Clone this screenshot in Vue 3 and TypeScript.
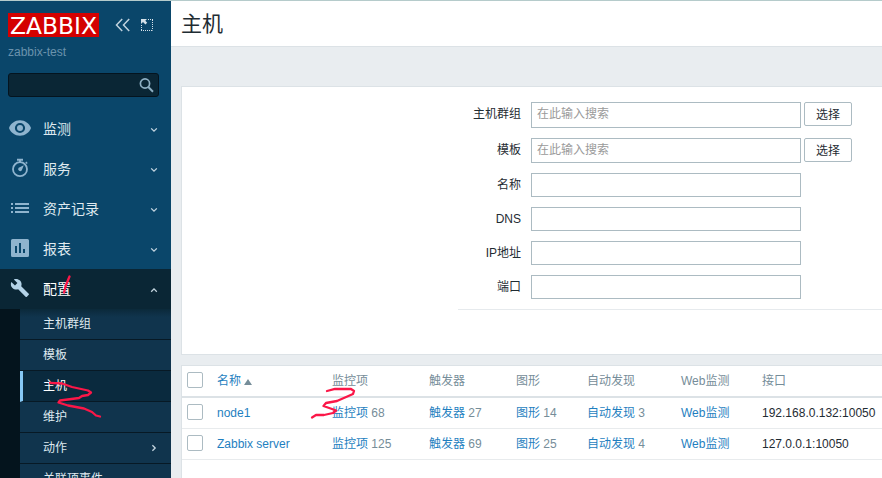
<script setup lang="ts">
interface MenuItem {
  label: string
  icon: string
  open?: boolean
}
interface Host {
  name: string
  items: number
  triggers: number
  graphs: number
  discovery: number
  address: string
}

const menu: MenuItem[] = [
  { label: '监测', icon: 'eye' },
  { label: '服务', icon: 'timer' },
  { label: '资产记录', icon: 'list' },
  { label: '报表', icon: 'chart' },
  { label: '配置', icon: 'wrench', open: true },
]
const submenu = [
  { label: '主机群组' },
  { label: '模板' },
  { label: '主机', active: true },
  { label: '维护' },
  { label: '动作', more: true },
  { label: '关联项事件' },
]
const fields = [
  { label: '主机群组', kind: 'select first' },
  { label: '模板', kind: 'select' },
  { label: '名称', kind: '' },
  { label: 'DNS', kind: '' },
  { label: 'IP地址', kind: '' },
  { label: '端口', kind: '' },
]
const hosts: Host[] = [
  { name: 'node1', items: 68, triggers: 27, graphs: 14, discovery: 3, address: '192.168.0.132:10050' },
  { name: 'Zabbix server', items: 125, triggers: 69, graphs: 25, discovery: 4, address: '127.0.0.1:10050' },
]
</script>

<template>
  <div class="page">
    <aside class="sidebar">
      <div class="brand">
        <svg class="logo" width="91" height="24" viewBox="0 0 91 24">
          <rect width="91" height="24" fill="#d40000" />
          <text x="2" y="20.500" textLength="87" lengthAdjust="spacingAndGlyphs">ZABBIX</text>
        </svg>
        <svg class="collapse" width="16" height="14" viewBox="0 0 16 14">
          <path d="M7.2 1 1.5 7l5.7 6M14.2 1 8.5 7l5.7 6" fill="none" stroke="#c0d2de" stroke-width="1.5" />
        </svg>
        <svg class="kiosk" width="12" height="12" viewBox="0 0 12 12" fill="#d5e1e9">
          <path d="M0 0h6L4.3 1.7 6.2 3.7 4.4 5.4 2 3.1 0 5z" />
          <path d="M7 .5H12M11.5 1v10.5M0 11.5h12M.5 6v5" fill="none" stroke="#d5e1e9" stroke-dasharray="1 1" />
        </svg>
      </div>
      <div class="server">zabbix-test</div>
      <div class="search">
        <svg width="15" height="15" viewBox="0 0 15 15" fill="none" stroke="#8fb0c4">
          <circle cx="6" cy="5.5" r="4.600" stroke-width="1.7" />
          <path d="m9.300 9 4.700 4.700" stroke-width="2" />
        </svg>
      </div>

      <nav class="menu">
        <div v-for="m in menu" :key="m.label" class="menu-item" :class="{ open: m.open }">
          <svg class="menu-icon" width="24" height="24" viewBox="0 0 24 24">
            <path v-if="m.icon === 'eye'" fill-rule="evenodd" d="M12 4.3C7 4.3 2.7 7.4 1 12c1.7 4.6 6 7.700 11 7.700S21.3 16.6 23 12C21.3 7.4 17 4.3 12 4.3zM12 17.1a5.1 5.1 0 1 1 0-10.2 5.1 5.1 0 0 1 0 10.2zM12 9a3 3 0 1 0 0 6 3 3 0 0 0 0-6z" />
            <g v-else-if="m.icon === 'timer'" transform="translate(0 .7)">
              <path d="M9 2h6v2H9zM11 3h2v3h-2zM17.3 5.8l1-1 1.4 1.4-1 1z" />
              <circle cx="12" cy="12.500" r="7" fill="none" stroke="#8fb4ce" stroke-width="1.8" />
              <path d="M15.8 8.6 13.7 13.7A2 2 0 1 1 10.7 11z" />
            </g>
            <path v-else-if="m.icon === 'list'" d="M3 7h2v2H3zM3 11h2v2H3zM3 15h2v2H3zM7 7h14v2H7zM7 11h14v2H7zM7 15h14v2H7z" />
            <path v-else-if="m.icon === 'chart'" transform="translate(0 1)" fill-rule="evenodd" d="M4.5 2h15A1.5 1.5 0 0 1 21 3.500v15a1.500 1.500 0 0 1-1.500 1.500h-15A1.500 1.500 0 0 1 3 18.500v-15A1.500 1.500 0 0 1 4.500 2zM7 9v7h2V9zM11 6v10h2V6zM15 12v4h2v-4z" />
            <path v-else transform="translate(1.500 1.600) scale(.93)" d="M20.700 17.300 12.600 9.300C13.400 7.200 13 4.900 11.300 3.200 9.500 1.400 6.800 1 4.700 2L8.500 5.800 5.900 8.400 2 4.600C.900 6.800 1.400 9.500 3.200 11.200c1.700 1.700 4.100 2.100 6.100 1.300l8 8c.4.4 1 .4 1.400 0l2-2c.400-.300.400-.900 0-1.200z" />
          </svg>
          <span>{{ m.label }}</span>
          <svg class="chevron" width="8" height="6" viewBox="0 0 8 6">
            <path :d="m.open ? 'M1.200 4.700 4 1.900l2.800 2.800' : 'M1.200 1.400 4 4.200l2.800-2.800'" />
          </svg>
        </div>
      </nav>
      <div class="submenu">
        <div v-for="s in submenu" :key="s.label" class="sub-item" :class="{ active: s.active }">
          <span>{{ s.label }}</span>
          <svg v-if="s.more" class="chevron more" width="6" height="8" viewBox="0 0 6 8">
            <path d="M1.400 1.200 4.200 4 1.400 6.800" />
          </svg>
        </div>
      </div>
    </aside>

    <main class="main">
      <header class="header"><h1>主机</h1></header>
      <section class="filter">
        <div class="form">
          <div v-for="f in fields" :key="f.label" class="field" :class="f.kind">
            <label>{{ f.label }}</label>
            <div class="input"><span v-if="f.kind">在此输入搜索</span></div>
            <button v-if="f.kind" type="button">选择</button>
          </div>
        </div>
      </section>
      <section class="table">
        <div class="row head">
          <span class="check"></span>
          <span class="name"><a>名称</a><i class="sort"></i></span>
          <span>监控项</span><span>触发器</span><span>图形</span><span>自动发现</span><span>Web监测</span><span>接口</span>
        </div>
        <div v-for="h in hosts" :key="h.name" class="row">
          <span class="check"></span>
          <span><a>{{ h.name }}</a></span>
          <span><a>监控项</a> {{ h.items }}</span>
          <span><a>触发器</a> {{ h.triggers }}</span>
          <span><a>图形</a> {{ h.graphs }}</span>
          <span><a>自动发现</a> {{ h.discovery }}</span>
          <span><a>Web监测</a></span>
          <span class="address">{{ h.address }}</span>
        </div>
      </section>
    </main>

    <svg class="marks" width="882" height="478" viewBox="0 0 882 478">
      <path d="M69.500 276.500 66 285 64 292.500" />
      <path d="M50 382.800 62 383.500 72 387 88 390.500 91 392.500 88 395 82 396 79 398 60 400.500 58.500 402.500 68 405.500 84 408.500 92 412 96 415.500 100 416.500" />
      <path d="M327 391 335 388.800 351 389 354 391 353 394 337 401 326 403 323.500 406 332 409 336 410.500 333 413 324 415 316 415 312 417.500" />
    </svg>
  </div>
</template>

<style>
body { overflow: hidden; }
</style>

<style scoped>
* { box-sizing: border-box; }
.page {
  position: relative;
  display: flex;
  width: 882px;
  height: 478px;
  overflow: hidden;
  border-top: 1px solid #b5cbcb;
  background: #e9edf0;
  color: #1f2c33;
  font: 12px/18px "Liberation Sans", "Noto Sans CJK SC", sans-serif;
}
.sidebar { width: 171px; flex: none; background: #0a466a; overflow: hidden; }
.brand { display: flex; height: 36px; padding: 12px 0 0 8px; }
.logo { flex: none; }
.logo text { fill: #fff; font: 23.5px "DejaVu Sans", sans-serif; }
.collapse { margin: 5px 0 0 16px; }
.kiosk { margin: 6px 0 0 10px; }
.server { height: 36px; padding: 6px 8px; color: #6b93ad; }
.search {
  display: flex;
  justify-content: flex-end;
  width: 151px;
  height: 24px;
  margin-left: 8px;
  padding: 4px 4px 0 0;
  border: 1px solid #04141f;
  border-radius: 3px;
  background: #0a2635;
}
.menu { padding-top: 12px; }
.menu-item {
  display: flex;
  align-items: center;
  height: 40px;
  padding: 0 13px 0 8px;
  color: #dfe9ef;
  font-size: 14px;
}
.menu-item.open { background: #0a2635; color: #fff; }
.menu-icon { margin: -2px 11px 0 0; fill: #8fb4ce; }
.open .menu-icon { fill: #b4d3e8; }
.chevron { margin: 2px 0 0 auto; fill: none; stroke: #c5d6e1; stroke-width: 1.300; }
.chevron.more { margin-top: 0; }
.submenu { border-left: 20px solid #04141d; background: #10344d; }
.sub-item {
  display: flex;
  align-items: center;
  height: 31px;
  padding: 0 14px 1px 23px;
  border-bottom: 1px solid #071925;
  color: #dfe9ef;
}
.sub-item:first-child { background: linear-gradient(#0b293a, #10344d 8px); }
.sub-item.active { padding-left: 20px; border-left: 3px solid #86c8f5; background: #0a2a3e; color: #fff; }

.main { flex: 1; min-width: 0; }
.header { height: 46px; padding-left: 10px; border-bottom: 1px solid #dce2e6; background: #fff; }
h1 { margin: 0; font-size: 21px; line-height: 45px; font-weight: 400; }
.filter { height: 269px; margin: 39px 0 0 10px; padding: 15px 0 0 276px; border: 1px solid #dce2e6; border-right: 0; background: #fff; }
.form { height: 208px; border-bottom: 1px solid #e6eaed; }
.field { display: flex; align-items: flex-start; height: 24px; margin-bottom: 10px; }
.field.select { height: 25px; }
.field.first { height: 26px; }
label { width: 63px; margin-right: 10px; line-height: 24px; text-align: right; }
.input { width: 270px; height: 100%; padding-left: 5px; border: 1px solid #acbbc2; color: #9a9a9a; line-height: 23px; }
button {
  width: 48px;
  height: 24px;
  margin-left: 3px;
  padding: 3px 0 0;
  border: 1px solid #acbbc2;
  border-radius: 2px;
  background: #fff;
  color: #1f2c33;
  font: inherit;
  line-height: 19px;
}
.table { height: 130px; margin: 10px 0 0 10px; border: 1px solid #dce2e6; border-right: 0; background: #fff; }
.row {
  display: grid;
  grid-template-columns: 30px 115px 97px 87px 71px 94px 81px 1fr;
  align-items: center;
  height: 31px;
  padding: 0 0 1px 5px;
  border-bottom: 1px solid #e8ebed;
  color: #768d99;
  white-space: nowrap;
}
.row.head { height: 32px; border-bottom: 2px solid #dce2e6; }
.check { width: 16px; height: 16px; margin-bottom: 2px; border: 1px solid #acbbc2; border-radius: 2px; background: #fff; }
a { color: #1f7fbf; }
.address { color: #1f2c33; }
.name { display: flex; align-items: center; }
.sort { margin: 3px 0 0 3px; border: 4px solid transparent; border-top: 0; border-bottom: 6px solid #768d99; }
.marks { position: absolute; left: 0; top: -1px; fill: none; stroke: #fb1748; stroke-width: 2.300; stroke-linecap: round; stroke-linejoin: round; }
</style>
